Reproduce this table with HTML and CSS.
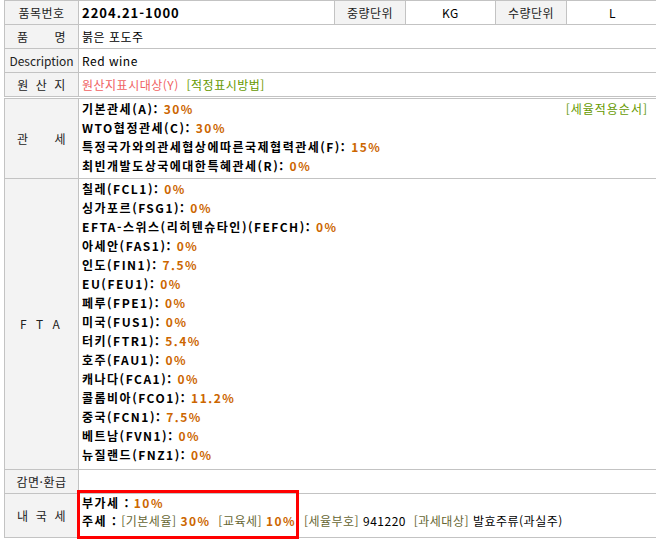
FILE: index.html
```html
<!DOCTYPE html>
<html lang="ko">
<head>
  <meta charset="UTF-8">
  <title>품목 세율 정보</title>
  <link rel="stylesheet" href="styles.css">
</head>
<body>
  <div class="sheet">
    <table class="grid">
      <colgroup>
        <col class="c-label">
        <col class="c-code">
        <col class="c-unit">
        <col class="c-val">
        <col class="c-unit">
        <col class="c-last">
      </colgroup>
      <tr class="row">
        <th>품목번호</th>
        <td class="code">2204.21-1000</td>
        <th>중량단위</th>
        <td class="center">KG</td>
        <th>수량단위</th>
        <td class="center">L</td>
      </tr>
      <tr class="row">
        <th><span class="spread"><span>품</span><span>명</span></span></th>
        <td colspan="5">붉은 포도주</td>
      </tr>
      <tr class="row">
        <th class="desc">Description</th>
        <td colspan="5">Red wine</td>
      </tr>
      <tr class="row">
        <th class="wide">원 산 지</th>
        <td colspan="5"><span class="pink">원산지표시대상(Y)</span>&nbsp; <span class="green">[적정표시방법]</span></td>
      </tr>
    </table>

    <table class="grid rates">
      <colgroup>
        <col class="c-label">
        <col class="c-rest">
      </colgroup>
      <tr class="row-tariff">
        <th><span class="spread"><span>관</span><span>세</span></span></th>
        <td class="list">
          <span class="order green">[세율적용순서]</span>
          <div class="item">기본관세(A): <em>30%</em></div>
          <div class="item">WTO협정관세(C): <em>30%</em></div>
          <div class="item">특정국가와의관세협상에따른국제협력관세(F): <em>15%</em></div>
          <div class="item">최빈개발도상국에대한특혜관세(R): <em>0%</em></div>
        </td>
      </tr>
      <tr class="row-fta">
        <th class="fta">F T A</th>
        <td class="list">
          <div class="item">칠레(FCL1): <em>0%</em></div>
          <div class="item">싱가포르(FSG1): <em>0%</em></div>
          <div class="item">EFTA-스위스(리히텐슈타인)(FEFCH): <em>0%</em></div>
          <div class="item">아세안(FAS1): <em>0%</em></div>
          <div class="item">인도(FIN1): <em>7.5%</em></div>
          <div class="item">EU(FEU1): <em>0%</em></div>
          <div class="item">페루(FPE1): <em>0%</em></div>
          <div class="item">미국(FUS1): <em>0%</em></div>
          <div class="item">터키(FTR1): <em>5.4%</em></div>
          <div class="item">호주(FAU1): <em>0%</em></div>
          <div class="item">캐나다(FCA1): <em>0%</em></div>
          <div class="item">콜롬비아(FCO1): <em>11.2%</em></div>
          <div class="item">중국(FCN1): <em>7.5%</em></div>
          <div class="item">베트남(FVN1): <em>0%</em></div>
          <div class="item">뉴질랜드(FNZ1): <em>0%</em></div>
        </td>
      </tr>
      <tr class="row">
        <th>감면·환급</th>
        <td></td>
      </tr>
      <tr class="row-inland">
        <th><span class="spread"><span>내</span><span>국</span><span>세</span></span></th>
        <td class="inland">
          <div class="line"><b>부가세 :</b> <em>10%</em></div>
          <div class="line"><b>주세 :</b> <span class="olive">[기본세율]</span> <em>30%</em>&nbsp; <span class="olive">[교육세]</span> <em>10%</em>&nbsp; <span class="olive">[세율부호]</span> 941220&nbsp; <span class="olive">[과세대상]</span> 발효주류(과실주)</div>
        </td>
      </tr>
    </table>

    <div class="highlight"></div>
  </div>
</body>
</html>
```

FILE: styles.css
```css
html, body {
  margin: 0;
  padding: 0;
  background: #ffffff;
}
body {
  width: 656px;
  height: 540px;
  overflow: hidden;
  font-family: "Noto Sans CJK KR", "DejaVu Sans", sans-serif;
  font-size: 12px;
  letter-spacing: 0.5px;
  color: #000000;
}
.sheet {
  position: relative;
  padding-left: 4px;
}
.grid {
  border-collapse: collapse;
  table-layout: fixed;
  width: 654px;
}
.rates {
  margin-top: 1px;
}
.c-label { width: 74px; }
.c-code { width: 256px; }
.c-unit { width: 71px; }
.c-val { width: 90px; }
.c-last { width: 92px; }
.grid th, .grid td {
  border: 1px solid #c3c3c3;
  padding: 0 3px;
  line-height: 18px;
  vertical-align: middle;
  text-align: left;
}
.grid th {
  background: #f3f3f3;
  font-weight: normal;
  text-align: center;
  color: #222222;
  white-space: nowrap;
}
.row {
  height: 24px;
}
.row-tariff {
  height: 80px;
}
.row-fta {
  height: 291px;
}
.row-inland {
  height: 44px;
}
.code {
  font-weight: bold;
  font-size: 13px;
  letter-spacing: 1px;
}
.center {
  text-align: center !important;
}
.desc {
  letter-spacing: 0;
}
.spread {
  display: flex;
  justify-content: space-between;
  padding: 0 9px 0 9px;
}
.wide {
  word-spacing: 3px;
}
.fta {
  letter-spacing: 3px;
}
.pink {
  color: #f06262;
}
.green {
  color: #669900;
}
.olive {
  color: #666633;
}
em {
  font-style: normal;
  font-weight: bold;
  color: #cc6600;
}
.list {
  vertical-align: top !important;
  padding: 0 9px 0 3px !important;
}
.item {
  font-weight: bold;
  letter-spacing: 1.5px;
  line-height: 19px;
}
.order {
  float: right;
  line-height: 19px;
  letter-spacing: 1px;
}
.inland {
  vertical-align: top !important;
}
.inland .line {
  line-height: 18px;
  white-space: nowrap;
}
.inland b {
  letter-spacing: 1.5px;
}
.inland em {
  letter-spacing: 1.5px;
}
.highlight {
  position: absolute;
  left: 77px;
  top: 490px;
  width: 216px;
  height: 43px;
  border: 3px solid #ff0000;
}
```
